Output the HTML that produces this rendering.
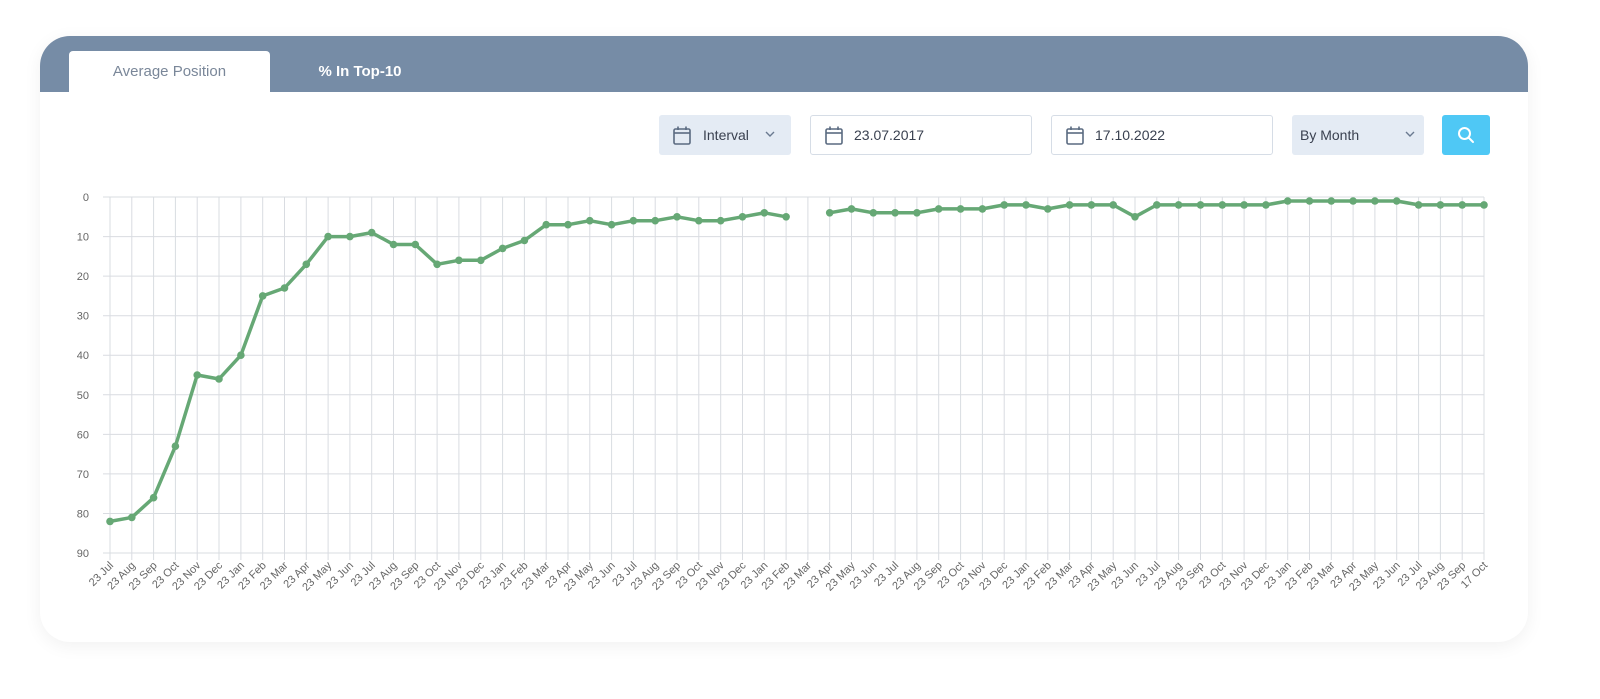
<!DOCTYPE html>
<html><head><meta charset="utf-8"><style>
body{margin:0;width:1600px;height:699px;background:#fff;font-family:"Liberation Sans",sans-serif;overflow:hidden;position:relative}
.card{position:absolute;left:40px;top:36px;width:1488px;height:606px;background:#fff;border-radius:30px;box-shadow:0 4px 18px rgba(0,0,0,0.06);overflow:hidden}
.hdr{position:absolute;left:0;top:0;width:100%;height:56px;background:#768ca6}
.tab{position:absolute;top:15px;height:41px;font-size:15px;line-height:41px;text-align:center}
.t1{left:29px;width:201px;background:#fff;color:#7a8799;border-radius:4px 4px 0 0}
.t2{left:240px;width:160px;color:#fff;font-weight:bold}
.ctl{position:absolute;top:79px;height:40px;box-sizing:border-box;border-radius:3px;font-size:14px;color:#3a4150;line-height:40px}
.sel{background:#e4ebf4}
.inp{background:#fff;border:1px solid #d6dde6;line-height:38px}
.cal{position:absolute;left:14px;top:11px}
.chev{position:absolute;top:0}
</style></head><body>
<div class="card">
 <div class="hdr"></div>
 <div class="tab t1">Average Position</div>
 <div class="tab t2">% In Top-10</div>
 <div class="ctl sel" style="left:619px;width:132px"><svg class="cal" width="18" height="19" viewBox="0 0 18 19"><rect x="1" y="3" width="16" height="15" rx="1.5" fill="none" stroke="#5a6a80" stroke-width="1.6"/><line x1="1" y1="7" x2="17" y2="7" stroke="#5a6a80" stroke-width="1.6"/><line x1="5" y1="0.5" x2="5" y2="4" stroke="#5a6a80" stroke-width="1.6"/><line x1="13" y1="0.5" x2="13" y2="4" stroke="#5a6a80" stroke-width="1.6"/></svg><span style="position:absolute;left:44px">Interval</span><svg class="chev" style="left:106px;top:16px" width="10" height="7"><path d="M1 1L5 5L9 1" fill="none" stroke="#6a7a90" stroke-width="1.4"/></svg></div>
 <div class="ctl inp" style="left:770px;width:222px"><svg class="cal" style="top:10px" width="18" height="19" viewBox="0 0 18 19"><rect x="1" y="3" width="16" height="15" rx="1.5" fill="none" stroke="#5a6a80" stroke-width="1.6"/><line x1="1" y1="7" x2="17" y2="7" stroke="#5a6a80" stroke-width="1.6"/><line x1="5" y1="0.5" x2="5" y2="4" stroke="#5a6a80" stroke-width="1.6"/><line x1="13" y1="0.5" x2="13" y2="4" stroke="#5a6a80" stroke-width="1.6"/></svg><span style="position:absolute;left:43px">23.07.2017</span></div>
 <div class="ctl inp" style="left:1011px;width:222px"><svg class="cal" style="top:10px" width="18" height="19" viewBox="0 0 18 19"><rect x="1" y="3" width="16" height="15" rx="1.5" fill="none" stroke="#5a6a80" stroke-width="1.6"/><line x1="1" y1="7" x2="17" y2="7" stroke="#5a6a80" stroke-width="1.6"/><line x1="5" y1="0.5" x2="5" y2="4" stroke="#5a6a80" stroke-width="1.6"/><line x1="13" y1="0.5" x2="13" y2="4" stroke="#5a6a80" stroke-width="1.6"/></svg><span style="position:absolute;left:43px">17.10.2022</span></div>
 <div class="ctl sel" style="left:1252px;width:132px"><span style="position:absolute;left:8px">By Month</span><svg class="chev" style="left:113px;top:16px" width="10" height="7"><path d="M1 1L5 5L9 1" fill="none" stroke="#6a7a90" stroke-width="1.4"/></svg></div>
 <div class="ctl" style="left:1402px;width:48px;background:#4fc8f5"><svg style="position:absolute;left:15px;top:11px" width="18" height="18"><circle cx="7.5" cy="7.5" r="5.5" fill="none" stroke="#fff" stroke-width="2"/><line x1="11.5" y1="11.5" x2="16" y2="16" stroke="#fff" stroke-width="2" stroke-linecap="round"/></svg></div>
</div>
<svg style="position:absolute;left:0;top:0" width="1600" height="699">
<g stroke="#d9dce1" stroke-width="1">
<line x1="103" y1="197" x2="1484" y2="197"/><line x1="103" y1="236.6" x2="1484" y2="236.6"/><line x1="103" y1="276.1" x2="1484" y2="276.1"/><line x1="103" y1="315.7" x2="1484" y2="315.7"/><line x1="103" y1="355.2" x2="1484" y2="355.2"/><line x1="103" y1="394.8" x2="1484" y2="394.8"/><line x1="103" y1="434.4" x2="1484" y2="434.4"/><line x1="103" y1="473.9" x2="1484" y2="473.9"/><line x1="103" y1="513.5" x2="1484" y2="513.5"/><line x1="103" y1="553" x2="1484" y2="553"/>
<line x1="110.0" y1="197" x2="110.0" y2="560"/><line x1="131.8" y1="197" x2="131.8" y2="560"/><line x1="153.6" y1="197" x2="153.6" y2="560"/><line x1="175.4" y1="197" x2="175.4" y2="560"/><line x1="197.2" y1="197" x2="197.2" y2="560"/><line x1="219.0" y1="197" x2="219.0" y2="560"/><line x1="240.9" y1="197" x2="240.9" y2="560"/><line x1="262.7" y1="197" x2="262.7" y2="560"/><line x1="284.5" y1="197" x2="284.5" y2="560"/><line x1="306.3" y1="197" x2="306.3" y2="560"/><line x1="328.1" y1="197" x2="328.1" y2="560"/><line x1="349.9" y1="197" x2="349.9" y2="560"/><line x1="371.7" y1="197" x2="371.7" y2="560"/><line x1="393.5" y1="197" x2="393.5" y2="560"/><line x1="415.3" y1="197" x2="415.3" y2="560"/><line x1="437.1" y1="197" x2="437.1" y2="560"/><line x1="458.9" y1="197" x2="458.9" y2="560"/><line x1="480.8" y1="197" x2="480.8" y2="560"/><line x1="502.6" y1="197" x2="502.6" y2="560"/><line x1="524.4" y1="197" x2="524.4" y2="560"/><line x1="546.2" y1="197" x2="546.2" y2="560"/><line x1="568.0" y1="197" x2="568.0" y2="560"/><line x1="589.8" y1="197" x2="589.8" y2="560"/><line x1="611.6" y1="197" x2="611.6" y2="560"/><line x1="633.4" y1="197" x2="633.4" y2="560"/><line x1="655.2" y1="197" x2="655.2" y2="560"/><line x1="677.0" y1="197" x2="677.0" y2="560"/><line x1="698.8" y1="197" x2="698.8" y2="560"/><line x1="720.7" y1="197" x2="720.7" y2="560"/><line x1="742.5" y1="197" x2="742.5" y2="560"/><line x1="764.3" y1="197" x2="764.3" y2="560"/><line x1="786.1" y1="197" x2="786.1" y2="560"/><line x1="807.9" y1="197" x2="807.9" y2="560"/><line x1="829.7" y1="197" x2="829.7" y2="560"/><line x1="851.5" y1="197" x2="851.5" y2="560"/><line x1="873.3" y1="197" x2="873.3" y2="560"/><line x1="895.1" y1="197" x2="895.1" y2="560"/><line x1="916.9" y1="197" x2="916.9" y2="560"/><line x1="938.7" y1="197" x2="938.7" y2="560"/><line x1="960.6" y1="197" x2="960.6" y2="560"/><line x1="982.4" y1="197" x2="982.4" y2="560"/><line x1="1004.2" y1="197" x2="1004.2" y2="560"/><line x1="1026.0" y1="197" x2="1026.0" y2="560"/><line x1="1047.8" y1="197" x2="1047.8" y2="560"/><line x1="1069.6" y1="197" x2="1069.6" y2="560"/><line x1="1091.4" y1="197" x2="1091.4" y2="560"/><line x1="1113.2" y1="197" x2="1113.2" y2="560"/><line x1="1135.0" y1="197" x2="1135.0" y2="560"/><line x1="1156.8" y1="197" x2="1156.8" y2="560"/><line x1="1178.6" y1="197" x2="1178.6" y2="560"/><line x1="1200.5" y1="197" x2="1200.5" y2="560"/><line x1="1222.3" y1="197" x2="1222.3" y2="560"/><line x1="1244.1" y1="197" x2="1244.1" y2="560"/><line x1="1265.9" y1="197" x2="1265.9" y2="560"/><line x1="1287.7" y1="197" x2="1287.7" y2="560"/><line x1="1309.5" y1="197" x2="1309.5" y2="560"/><line x1="1331.3" y1="197" x2="1331.3" y2="560"/><line x1="1353.1" y1="197" x2="1353.1" y2="560"/><line x1="1374.9" y1="197" x2="1374.9" y2="560"/><line x1="1396.7" y1="197" x2="1396.7" y2="560"/><line x1="1418.6" y1="197" x2="1418.6" y2="560"/><line x1="1440.4" y1="197" x2="1440.4" y2="560"/><line x1="1462.2" y1="197" x2="1462.2" y2="560"/><line x1="1484.0" y1="197" x2="1484.0" y2="560"/>
</g>
<g font-size="11" fill="#666" text-anchor="end" font-family="Liberation Sans, sans-serif">
<text x="89" y="201">0</text><text x="89" y="240.6">10</text><text x="89" y="280.1">20</text><text x="89" y="319.7">30</text><text x="89" y="359.2">40</text><text x="89" y="398.8">50</text><text x="89" y="438.4">60</text><text x="89" y="477.9">70</text><text x="89" y="517.5">80</text><text x="89" y="557">90</text>
</g>
<g font-size="11" fill="#666" text-anchor="end" font-family="Liberation Sans, sans-serif">
<text transform="translate(114,566) rotate(-45)">23 Jul</text><text transform="translate(135.8,566) rotate(-45)">23 Aug</text><text transform="translate(157.6,566) rotate(-45)">23 Sep</text><text transform="translate(179.4,566) rotate(-45)">23 Oct</text><text transform="translate(201.2,566) rotate(-45)">23 Nov</text><text transform="translate(223,566) rotate(-45)">23 Dec</text><text transform="translate(244.9,566) rotate(-45)">23 Jan</text><text transform="translate(266.7,566) rotate(-45)">23 Feb</text><text transform="translate(288.5,566) rotate(-45)">23 Mar</text><text transform="translate(310.3,566) rotate(-45)">23 Apr</text><text transform="translate(332.1,566) rotate(-45)">23 May</text><text transform="translate(353.9,566) rotate(-45)">23 Jun</text><text transform="translate(375.7,566) rotate(-45)">23 Jul</text><text transform="translate(397.5,566) rotate(-45)">23 Aug</text><text transform="translate(419.3,566) rotate(-45)">23 Sep</text><text transform="translate(441.1,566) rotate(-45)">23 Oct</text><text transform="translate(462.9,566) rotate(-45)">23 Nov</text><text transform="translate(484.8,566) rotate(-45)">23 Dec</text><text transform="translate(506.6,566) rotate(-45)">23 Jan</text><text transform="translate(528.4,566) rotate(-45)">23 Feb</text><text transform="translate(550.2,566) rotate(-45)">23 Mar</text><text transform="translate(572,566) rotate(-45)">23 Apr</text><text transform="translate(593.8,566) rotate(-45)">23 May</text><text transform="translate(615.6,566) rotate(-45)">23 Jun</text><text transform="translate(637.4,566) rotate(-45)">23 Jul</text><text transform="translate(659.2,566) rotate(-45)">23 Aug</text><text transform="translate(681,566) rotate(-45)">23 Sep</text><text transform="translate(702.8,566) rotate(-45)">23 Oct</text><text transform="translate(724.7,566) rotate(-45)">23 Nov</text><text transform="translate(746.5,566) rotate(-45)">23 Dec</text><text transform="translate(768.3,566) rotate(-45)">23 Jan</text><text transform="translate(790.1,566) rotate(-45)">23 Feb</text><text transform="translate(811.9,566) rotate(-45)">23 Mar</text><text transform="translate(833.7,566) rotate(-45)">23 Apr</text><text transform="translate(855.5,566) rotate(-45)">23 May</text><text transform="translate(877.3,566) rotate(-45)">23 Jun</text><text transform="translate(899.1,566) rotate(-45)">23 Jul</text><text transform="translate(920.9,566) rotate(-45)">23 Aug</text><text transform="translate(942.7,566) rotate(-45)">23 Sep</text><text transform="translate(964.6,566) rotate(-45)">23 Oct</text><text transform="translate(986.4,566) rotate(-45)">23 Nov</text><text transform="translate(1008.2,566) rotate(-45)">23 Dec</text><text transform="translate(1030,566) rotate(-45)">23 Jan</text><text transform="translate(1051.8,566) rotate(-45)">23 Feb</text><text transform="translate(1073.6,566) rotate(-45)">23 Mar</text><text transform="translate(1095.4,566) rotate(-45)">23 Apr</text><text transform="translate(1117.2,566) rotate(-45)">23 May</text><text transform="translate(1139,566) rotate(-45)">23 Jun</text><text transform="translate(1160.8,566) rotate(-45)">23 Jul</text><text transform="translate(1182.6,566) rotate(-45)">23 Aug</text><text transform="translate(1204.5,566) rotate(-45)">23 Sep</text><text transform="translate(1226.3,566) rotate(-45)">23 Oct</text><text transform="translate(1248.1,566) rotate(-45)">23 Nov</text><text transform="translate(1269.9,566) rotate(-45)">23 Dec</text><text transform="translate(1291.7,566) rotate(-45)">23 Jan</text><text transform="translate(1313.5,566) rotate(-45)">23 Feb</text><text transform="translate(1335.3,566) rotate(-45)">23 Mar</text><text transform="translate(1357.1,566) rotate(-45)">23 Apr</text><text transform="translate(1378.9,566) rotate(-45)">23 May</text><text transform="translate(1400.7,566) rotate(-45)">23 Jun</text><text transform="translate(1422.6,566) rotate(-45)">23 Jul</text><text transform="translate(1444.4,566) rotate(-45)">23 Aug</text><text transform="translate(1466.2,566) rotate(-45)">23 Sep</text><text transform="translate(1488,566) rotate(-45)">17 Oct</text>
</g>
<g fill="none" stroke="#66a875" stroke-width="3.5" stroke-linejoin="round">
<polyline points="110,521.4 131.8,517.4 153.6,497.7 175.4,446.2 197.2,375 219,379 240.9,355.2 262.7,295.9 284.5,288 306.3,264.3 328.1,236.6 349.9,236.6 371.7,232.6 393.5,244.5 415.3,244.5 437.1,264.3 458.9,260.3 480.8,260.3 502.6,248.4 524.4,240.5 546.2,224.7 568,224.7 589.8,220.7 611.6,224.7 633.4,220.7 655.2,220.7 677,216.8 698.8,220.7 720.7,220.7 742.5,216.8 764.3,212.8 786.1,216.8"/>
<polyline points="829.7,212.8 851.5,208.9 873.3,212.8 895.1,212.8 916.9,212.8 938.7,208.9 960.6,208.9 982.4,208.9 1004.2,204.9 1026,204.9 1047.8,208.9 1069.6,204.9 1091.4,204.9 1113.2,204.9 1135,216.8 1156.8,204.9 1178.6,204.9 1200.5,204.9 1222.3,204.9 1244.1,204.9 1265.9,204.9 1287.7,201 1309.5,201 1331.3,201 1353.1,201 1374.9,201 1396.7,201 1418.6,204.9 1440.4,204.9 1462.2,204.9 1484,204.9"/>
</g>
<g fill="#66a875">
<circle cx="110" cy="521.4" r="3.8"/><circle cx="131.8" cy="517.4" r="3.8"/><circle cx="153.6" cy="497.7" r="3.8"/><circle cx="175.4" cy="446.2" r="3.8"/><circle cx="197.2" cy="375" r="3.8"/><circle cx="219" cy="379" r="3.8"/><circle cx="240.9" cy="355.2" r="3.8"/><circle cx="262.7" cy="295.9" r="3.8"/><circle cx="284.5" cy="288" r="3.8"/><circle cx="306.3" cy="264.3" r="3.8"/><circle cx="328.1" cy="236.6" r="3.8"/><circle cx="349.9" cy="236.6" r="3.8"/><circle cx="371.7" cy="232.6" r="3.8"/><circle cx="393.5" cy="244.5" r="3.8"/><circle cx="415.3" cy="244.5" r="3.8"/><circle cx="437.1" cy="264.3" r="3.8"/><circle cx="458.9" cy="260.3" r="3.8"/><circle cx="480.8" cy="260.3" r="3.8"/><circle cx="502.6" cy="248.4" r="3.8"/><circle cx="524.4" cy="240.5" r="3.8"/><circle cx="546.2" cy="224.7" r="3.8"/><circle cx="568" cy="224.7" r="3.8"/><circle cx="589.8" cy="220.7" r="3.8"/><circle cx="611.6" cy="224.7" r="3.8"/><circle cx="633.4" cy="220.7" r="3.8"/><circle cx="655.2" cy="220.7" r="3.8"/><circle cx="677" cy="216.8" r="3.8"/><circle cx="698.8" cy="220.7" r="3.8"/><circle cx="720.7" cy="220.7" r="3.8"/><circle cx="742.5" cy="216.8" r="3.8"/><circle cx="764.3" cy="212.8" r="3.8"/><circle cx="786.1" cy="216.8" r="3.8"/>
<circle cx="829.7" cy="212.8" r="3.8"/><circle cx="851.5" cy="208.9" r="3.8"/><circle cx="873.3" cy="212.8" r="3.8"/><circle cx="895.1" cy="212.8" r="3.8"/><circle cx="916.9" cy="212.8" r="3.8"/><circle cx="938.7" cy="208.9" r="3.8"/><circle cx="960.6" cy="208.9" r="3.8"/><circle cx="982.4" cy="208.9" r="3.8"/><circle cx="1004.2" cy="204.9" r="3.8"/><circle cx="1026" cy="204.9" r="3.8"/><circle cx="1047.8" cy="208.9" r="3.8"/><circle cx="1069.6" cy="204.9" r="3.8"/><circle cx="1091.4" cy="204.9" r="3.8"/><circle cx="1113.2" cy="204.9" r="3.8"/><circle cx="1135" cy="216.8" r="3.8"/><circle cx="1156.8" cy="204.9" r="3.8"/><circle cx="1178.6" cy="204.9" r="3.8"/><circle cx="1200.5" cy="204.9" r="3.8"/><circle cx="1222.3" cy="204.9" r="3.8"/><circle cx="1244.1" cy="204.9" r="3.8"/><circle cx="1265.9" cy="204.9" r="3.8"/><circle cx="1287.7" cy="201" r="3.8"/><circle cx="1309.5" cy="201" r="3.8"/><circle cx="1331.3" cy="201" r="3.8"/><circle cx="1353.1" cy="201" r="3.8"/><circle cx="1374.9" cy="201" r="3.8"/><circle cx="1396.7" cy="201" r="3.8"/><circle cx="1418.6" cy="204.9" r="3.8"/><circle cx="1440.4" cy="204.9" r="3.8"/><circle cx="1462.2" cy="204.9" r="3.8"/><circle cx="1484" cy="204.9" r="3.8"/>
</g>
</svg>
</body></html>
